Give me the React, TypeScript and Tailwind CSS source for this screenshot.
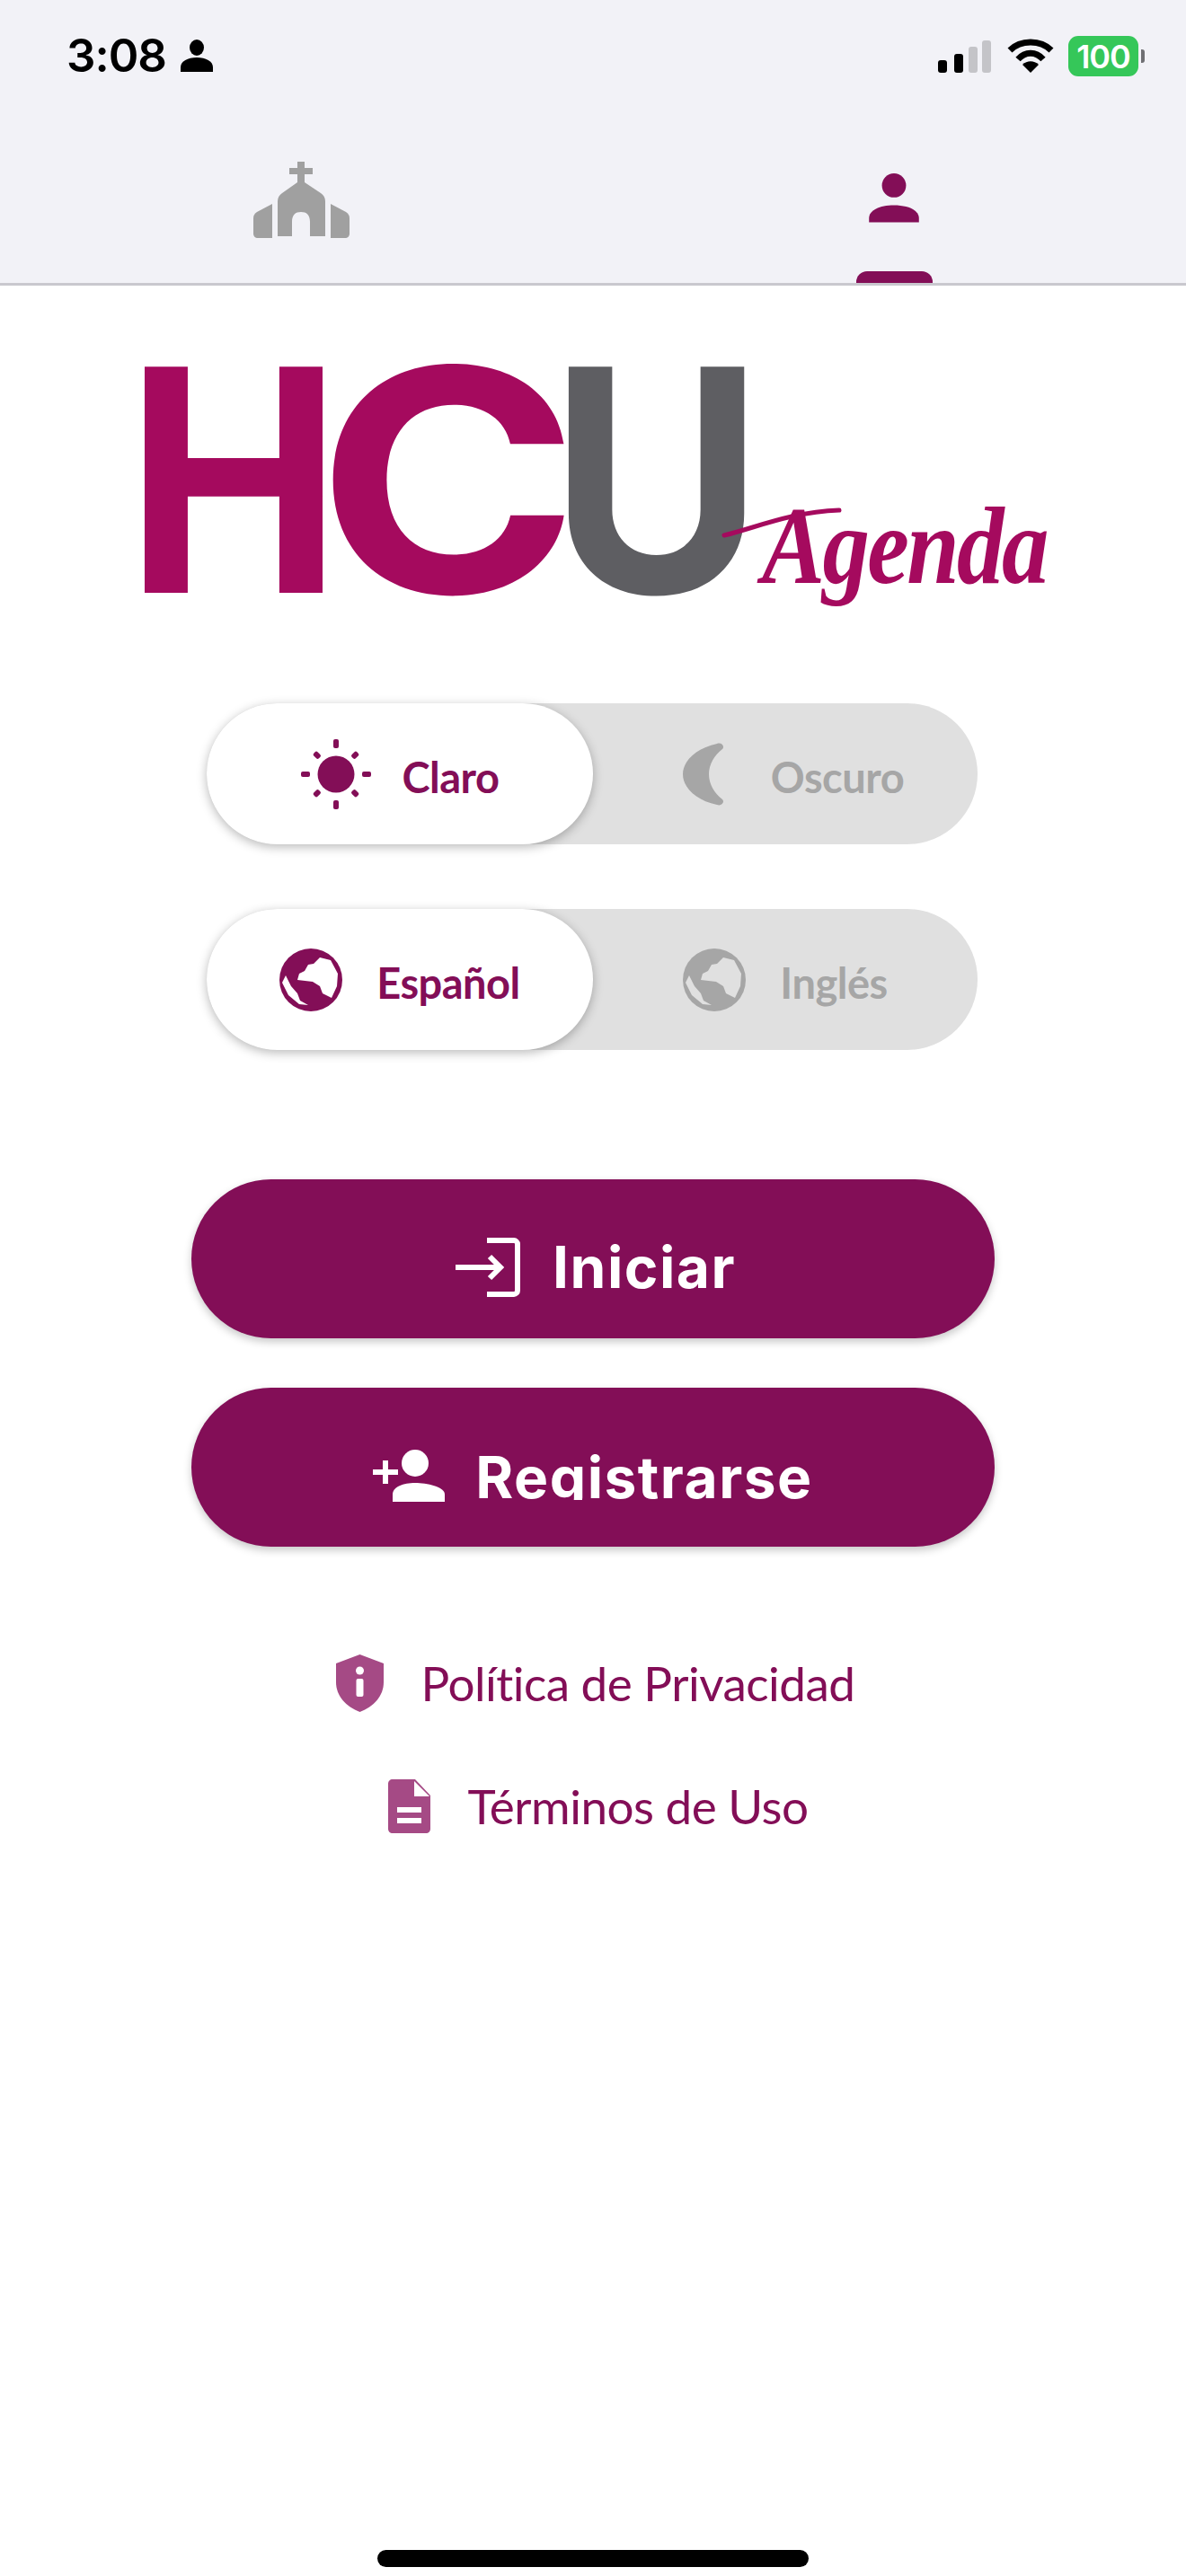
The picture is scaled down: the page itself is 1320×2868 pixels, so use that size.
const wine = "text-[#830e57]";

function StatusBar() {
  return (
    <div className="flex h-[124px] items-start justify-between pl-[74px] pr-[53px] pt-[38px]">
      <div className="flex items-center gap-[16px]">
        <span className="font-['Inter',sans-serif] text-[51px] leading-[48px] font-semibold tracking-[-1px] text-black">3:08</span>
        <svg viewBox="0 0 36 36" className="h-[36px] w-[36px]" fill="#000">
          <ellipse cx="18" cy="9" rx="8" ry="9" />
          <path d="M0 36v-5c0-7 8-11 18-11s18 4 18 11v5z" />
        </svg>
      </div>
      <div className="mt-[2px] flex items-start">
        {/* signal */}
        <svg viewBox="0 0 60 36" className="mt-[5px] h-[36px] w-[60px]">
          <rect x="0" y="22" width="10" height="14" rx="3" fill="#000" />
          <rect x="18" y="15" width="10" height="21" rx="3" fill="#000" />
          <rect x="34" y="7" width="10" height="29" rx="3" fill="#c4c4c8" />
          <rect x="49" y="0" width="10" height="36" rx="3" fill="#c4c4c8" />
        </svg>
        {/* wifi */}
        <svg viewBox="0 0 52 38" className="ml-[17px] mt-[3px] h-[38px] w-[52px]" fill="none" stroke="#000" strokeWidth="7">
          <path d="M3 13C15 1 37 1 49 13" />
          <path d="M12 23C20 14 32 14 40 23" />
          <path d="M26 38L17 29C22 24 30 24 35 29Z" fill="#000" stroke="none" />
        </svg>
        <div className="relative ml-[16px] flex h-[45px] w-[78px] items-center justify-center rounded-[11px] bg-[#35c759]">
          <span className="font-['Inter',sans-serif] text-[36px] leading-none font-semibold tracking-[-1px] text-white">100</span>
          <div className="absolute right-[-7px] top-[15px] h-[15px] w-[4px] rounded-r-[3px] bg-[#6f6f73]" />
        </div>
      </div>
    </div>
  );
}

function TabBar() {
  return (
    <div className="flex h-[194px] border-b-[3px] border-[#c9c8ce]">
      <div className="flex w-[670px] justify-center pt-[56px]">
        <svg viewBox="282 180 107 86" className="h-[86px] w-[107px]" fill="#a0a0a0">
          <path d="M331 180h8v7h9v7h-9v9l18 12c3 2 5 5 5 9v39h-17v-16c0-8-4-11-10-11s-10 3-10 11v16h-16v-39c0-4 2-7 5-9l17-12v-9h-9v-7h9z" />
          <path d="M303 227v38h-16c-3 0-5-2-5-5v-17c0-3 1-5 4-7z" />
          <path d="M368 227v38h16c3 0 5-2 5-5v-17c0-3-1-5-4-7z" />
        </svg>
      </div>
      <div className="flex flex-1 flex-col items-center">
        <svg viewBox="0 0 58 57" className="mt-[69px] h-[57px] w-[58px]" fill="#830e57">
          <ellipse cx="29" cy="14" rx="14" ry="14" />
          <path d="M0 57V52C0 43 12 37 29 37s29 6 29 15v5z" />
        </svg>
        <div className="mt-[54px] h-[14px] w-[85px] rounded-t-[12px] bg-[#830e57]" />
      </div>
    </div>
  );
}

function Logo() {
  return (
    <div className="relative mt-[81px] h-[319px] w-full font-['Inter',sans-serif] text-[346px] font-bold">
      <div className="ml-[160px] flex h-[270px] items-center leading-none text-[#a50a5e]">
        <span className="flex w-[200px] justify-center scale-x-[0.93]">H</span>
        <span className="ml-[10px] flex w-[257px] justify-center scale-x-[1.14]">C</span>
        <span className="ml-[3px] flex w-[201px] justify-center scale-x-[0.94] text-[#5e5e62]">U</span>
      </div>
      <svg viewBox="0 0 140 50" className="absolute left-[800px] top-[155px] h-[50px] w-[140px]" fill="none" stroke="#a50a5e" strokeWidth="5" strokeLinecap="round">
        <path d="M6 42C40 34 80 16 134 14" />
      </svg>
      <span className="absolute left-[848px] top-[148px] origin-left scale-x-[0.86] font-['Liberation_Serif',serif] text-[122px] leading-none font-bold italic tracking-[-3px] text-[#a50a5e]">
        Agenda
      </span>
    </div>
  );
}

function Sun() {
  return (
    <svg viewBox="0 0 78 78" className="h-[78px] w-[78px]" fill="#830e57">
      <circle cx="39" cy="39" r="20.500" />
      <rect x="36" y="0" width="6" height="10" rx="2" />
      <rect x="36" y="68" width="6" height="10" rx="2" />
      <rect x="0" y="36" width="10" height="6" rx="2" />
      <rect x="68" y="36" width="10" height="6" rx="2" />
      <rect x="36" y="5" width="6" height="8" rx="2" transform="rotate(45 39 39)" />
      <rect x="36" y="5" width="6" height="8" rx="2" transform="rotate(135 39 39)" />
      <rect x="36" y="5" width="6" height="8" rx="2" transform="rotate(225 39 39)" />
      <rect x="36" y="5" width="6" height="8" rx="2" transform="rotate(315 39 39)" />
    </svg>
  );
}

function Moon() {
  return (
    <svg viewBox="0 0 46 70" className="h-[70px] w-[46px]" fill="#a6a6a6">
      <path d="M38 1c5-2 9 3 6 6-9 7-15 17-15 28s6 21 15 28c3 3-1 8-6 6C15 64 0 50 0 35S15 6 38 1z" />
    </svg>
  );
}

function Globe({ color, land }: { color: string; land: string }) {
  return (
    <svg viewBox="0 0 70 70" className="h-[70px] w-[70px]">
      <circle cx="35" cy="35" r="35" fill={color} />
      <path
        d="M45 10L38 17L32 18L28 25L22 28L20 35L37 37L45 42L48 50L58 55L64 42L65 28L57 13Z"
        fill={land}
      />
      <path d="M7 30L13 42L20 50L23 58L32 63L22 62L10 52L3 38Z" fill={land} />
    </svg>
  );
}

function Toggle({ left, right }: { left: React.ReactNode; right: React.ReactNode }) {
  return (
    <div className="relative ml-[230px] flex h-[157px] w-[858px] items-center rounded-full bg-[#e0e0e0]">
      <div className="flex h-full w-[430px] items-center justify-center rounded-full bg-white shadow-[0_3px_12px_rgba(0,0,0,0.28)]">
        {left}
      </div>
      <div className="flex h-full flex-1 items-center justify-center">{right}</div>
    </div>
  );
}

function ToggleLabel({ text, active }: { text: string; active?: boolean }) {
  return (
    <span
      className={`mt-[8px] font-['Lato',sans-serif] text-[47px] leading-none font-bold tracking-[-0.5px] ${
        active ? wine : "text-[#a6a6a6]"
      }`}
    >
      {text}
    </span>
  );
}

function ActionButton({ icon, label, clip }: { icon: React.ReactNode; label: string; clip?: boolean }) {
  return (
    <div className="ml-[213px] flex h-[177px] w-[894px] items-center justify-center rounded-full bg-[#830e57] pt-[18px] shadow-[0_4px_10px_rgba(0,0,0,0.22)]">
      {icon}
      <span
        className={`font-['Inter',sans-serif] text-[64px] font-bold tracking-[1.5px] text-white ${
          clip ? "mt-[-4px] h-[58px] overflow-hidden leading-[66px]" : "leading-none"
        }`}
      >
        {label}
      </span>
    </div>
  );
}

export default function App() {
  return (
    <div className="relative flex h-[2868px] w-[1320px] flex-col overflow-hidden bg-white">
      <div className="bg-[#f2f2f7]">
        <StatusBar />
        <TabBar />
      </div>
      <Logo />

      <div className="mt-[65px] flex flex-col gap-[72px]">
        <Toggle
          left={
            <div className="flex items-center gap-[35px]">
              <Sun />
              <ToggleLabel text="Claro" active />
            </div>
          }
          right={
            <div className="ml-[18px] flex items-center gap-[52px]">
              <Moon />
              <ToggleLabel text="Oscuro" />
            </div>
          }
        />
        <Toggle
          left={
            <div className="flex items-center gap-[38px]">
              <Globe color="#830e57" land="#ffffff" />
              <ToggleLabel text="Español" active />
            </div>
          }
          right={
            <div className="flex items-center gap-[38px]">
              <Globe color="#a6a6a6" land="#e0e0e0" />
              <ToggleLabel text="Inglés" />
            </div>
          }
        />
      </div>

      <div className="mt-[144px] flex flex-col gap-[55px]">
        <ActionButton
          label="Iniciar"
          icon={
            <svg viewBox="0 0 72 66" className="ml-[6px] mr-[36px] h-[66px] w-[72px]" fill="none" stroke="#fff" strokeWidth="6">
              <path d="M35 3h30c2 0 4 2 4 4v52c0 2-2 4-4 4H35" />
              <path d="M0 33h50M38 21l12 12-12 12" />
            </svg>
          }
        />
        <ActionButton
          clip
          label="Registrarse"
          icon={
            <svg viewBox="0 0 80 58" className="mr-[34px] h-[58px] w-[80px]" fill="#fff">
              <circle cx="47" cy="15" r="15" />
              <path d="M22 58V50c0-9 12-13 25-13s33 4 33 13v8z" />
              <path d="M0 22h11v-10h6v10h11v6H17v10h-6V28H0z" />
            </svg>
          }
        />
      </div>

      <div className="mt-[120px] flex flex-col items-center gap-[73px] font-['Lato',sans-serif] text-[53px] leading-[64px] font-normal tracking-[-0.5px] text-[#830e57]">
        <div className="ml-[6px] flex items-center gap-[41px]">
          <svg viewBox="0 0 53 64" className="h-[64px] w-[53px]">
            <path d="M26.500 0L53 10v21c0 15-11 27-26.500 33C11 58 0 46 0 31V10z" fill="#a54a85" />
            <circle cx="26.500" cy="18" r="4.500" fill="#fff" />
            <rect x="22.500" y="27" width="8" height="20" rx="2" fill="#fff" />
          </svg>
          <span>Política de Privacidad</span>
        </div>
        <div className="ml-[12px] flex items-center gap-[41px]">
          <svg viewBox="0 0 47 60" className="h-[60px] w-[47px]">
            <path d="M5 0h25l17 18v37c0 3-2 5-5 5H5c-3 0-5-2-5-5V5c0-3 2-5 5-5z" fill="#a54a85" />
            <path d="M29 2v17h17z" fill="#fff" />
            <rect x="10" y="31" width="27" height="6" fill="#fff" />
            <rect x="10" y="43" width="27" height="6" fill="#fff" />
          </svg>
          <span>Términos de Uso</span>
        </div>
      </div>

      <div className="absolute bottom-[10px] left-[420px] h-[19px] w-[480px] rounded-full bg-black" />
    </div>
  );
}
